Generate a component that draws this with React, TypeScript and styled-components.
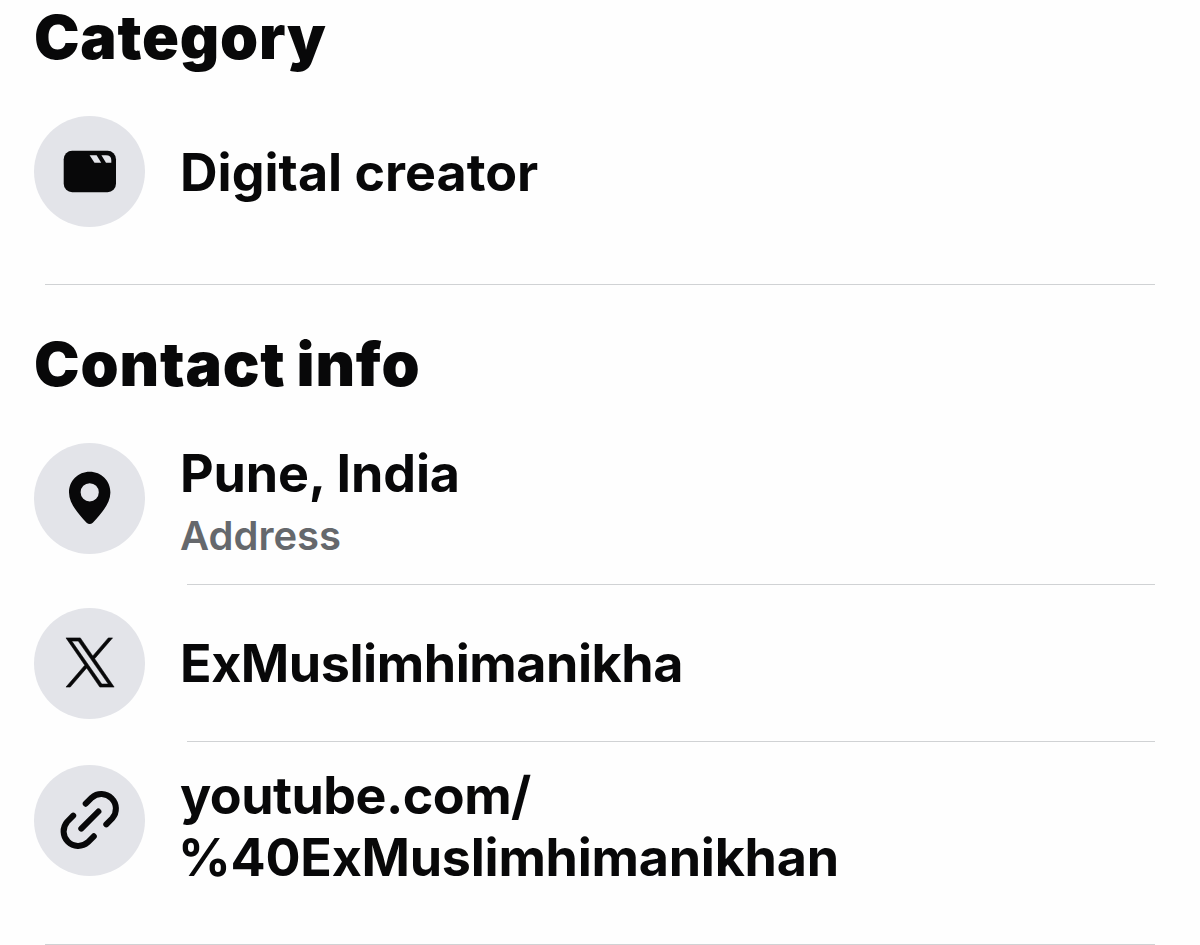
import React from 'react';
import styled, { createGlobalStyle } from 'styled-components';

const Global = createGlobalStyle`
  * { box-sizing: border-box; }
  body { margin: 0; background: #fefefe; color: #080809; font-family: Inter, "Liberation Sans", sans-serif; overflow: hidden; }
`;
const Page = styled.main`
  width: 1200px; height: 945px; overflow: hidden; display: flex; flex-direction: column;
`;
const Section = styled.section<{ $height: number }>`
  height: ${p => p.$height}px; flex: none; padding-left: 34px;
`;
const Heading = styled.h2<{ $top: number; $spacing: number }>`
  margin: 0; padding-top: ${p => p.$top}px; font-size: 61px; line-height: 74px; font-weight: 900;
  letter-spacing: ${p => p.$spacing}px; word-spacing: -2px; white-space: nowrap;
`;
const Row = styled.div<{ $top: number }>`
  display: flex; align-items: flex-start; padding-top: ${p => p.$top}px;
`;
const Disc = styled.div`
  width: 111px; height: 111px; flex: none; border-radius: 50%; background: #e3e4e9; color: #080809;
  svg { width: 111px; height: 111px; display: block; }
`;
const Copy = styled.div<{ $top: number }>`
  margin-left: 35px; padding-top: ${p => p.$top}px;
`;
const Title = styled.div<{ $spacing: number; $shift?: number }>`
  font-size: 52px; line-height: 62px; font-weight: 700; letter-spacing: ${p => p.$spacing}px; white-space: nowrap;
  margin-left: ${p => p.$shift ?? 0}px;
`;
const Sub = styled.div`
  font-size: 40px; line-height: 50px; font-weight: 600; color: #65686c; margin-top: 6px;
`;
const Rule = styled.hr<{ $left: number }>`
  flex: none; height: 1px; border: 0; margin: 0 45px 0 ${p => p.$left}px; background: #d0d2d4;
`;

const ClapperIcon = () => (
  <svg viewBox="0 0 111 111">
    <rect x="29.7" y="34.7" width="52.3" height="41.6" rx="8.5" fill="currentColor" />
    <path d="M55.6 39.2h7l4.6 7.5h-6.7zM67.4 39.2H72q5.3 0 5.3 5v2.5h-5.3z" fill="#e3e4e9" />
  </svg>
);
const PinIcon = () => (
  <svg viewBox="0 0 111 111">
    <path
      fillRule="evenodd"
      fill="currentColor"
      d="M55.7 28.7C44 28.7 35 37.9 35 49.4C35 60 44 70.8 52.6 79.7Q55.7 82.3 58.8 79.7C67.4 70.8 76.4 60 76.4 49.4C76.4 37.9 67.4 28.7 55.7 28.7ZM55.7 40.2a9.1 9.1 0 1 1 0 18.2a9.1 9.1 0 0 1 0-18.2Z"
    />
  </svg>
);
const XIcon = () => (
  <svg viewBox="0 0 111 111">
    <path
      transform="translate(32 29.9) scale(.0401)"
      fill="currentColor"
      stroke="currentColor"
      strokeWidth="14"
      d="M714.163 519.284L1160.89 0H1055.03L667.137 450.887L357.328 0H0L468.492 681.821L0 1226.37H105.866L515.491 750.218L842.672 1226.37H1200L714.137 519.284H714.163ZM569.165 687.828L521.697 619.934L144.011 79.6944H306.615L611.412 515.685L658.88 583.579L1055.08 1150.3H892.476L569.165 687.854V687.828Z"
    />
  </svg>
);
const LinkIcon = () => (
  <svg viewBox="0 0 111 111" fill="none" stroke="currentColor" strokeWidth="6" strokeLinecap="round">
    <path d="M51.7 38.7L57.7 32.7A14.6 14.6 0 0 1 78.3 53.3L72.3 59.3M59.8 71.3L53.8 77.3A14.6 14.6 0 0 1 33.2 56.7L39.2 50.7M64.4 46.5L47.3 63.6" />
  </svg>
);

export default function App() {
  return (
    <Page>
      <Global />
      <Section $height={284}>
        <Heading $top={0} $spacing={0.75}>Category</Heading>
        <Row $top={42}>
          <Disc><ClapperIcon /></Disc>
          <Copy $top={26}><Title $spacing={0}>Digital creator</Title></Copy>
        </Row>
      </Section>
      <Rule $left={45} />
      <Section $height={299}>
        <Heading $top={42} $spacing={0.85}>Contact info</Heading>
        <Row $top={42}>
          <Disc><PinIcon /></Disc>
          <Copy $top={0}><Title $spacing={-0.15}>Pune, India</Title><Sub>Address</Sub></Copy>
        </Row>
      </Section>
      <Rule $left={187} />
      <Section $height={156}>
        <Row $top={23}>
          <Disc><XIcon /></Disc>
          <Copy $top={25}><Title $spacing={-0.45}>ExMuslimhimanikha</Title></Copy>
        </Row>
      </Section>
      <Rule $left={187} />
      <Section $height={202}>
        <Row $top={23}>
          <Disc><LinkIcon /></Disc>
          <Copy $top={0}><Title $spacing={-0.55}>youtube.com/</Title><Title $spacing={-0.25} $shift={-2}>%40ExMuslimhimanikhan</Title></Copy>
        </Row>
      </Section>
      <Rule $left={45} />
    </Page>
  );
}
